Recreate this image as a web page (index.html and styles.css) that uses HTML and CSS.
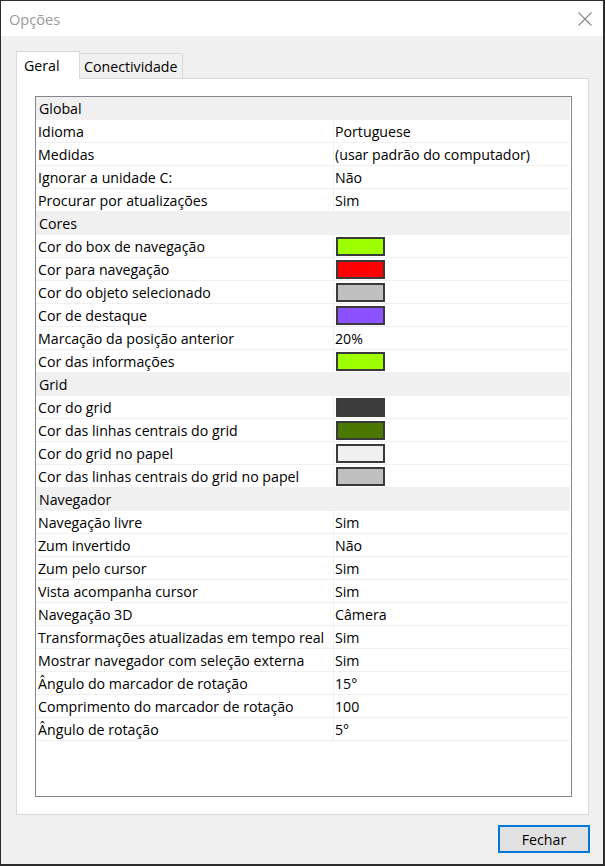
FILE: index.html
```html
<!DOCTYPE html>
<html lang="pt">
<head>
  <meta charset="UTF-8">
  <meta name="viewport" content="width=device-width, initial-scale=1.0">
  <title>Opções</title>
  <link rel="stylesheet" href="styles.css">
</head>
<body>
  <div class="window">
    <!-- Title bar -->
    <div class="titlebar">
      <span class="title">Opções</span>
      <svg class="close" width="14" height="14" viewBox="0 0 14 14">
        <path d="M0.5 0.5 L13.5 13.5 M13.5 0.5 L0.5 13.5" stroke="#8a8a8a" stroke-width="1.1" fill="none" />
      </svg>
    </div>

    <div class="content">
      <!-- Tabs -->
      <div class="tabs">
        <div class="tab active">Geral</div>
        <div class="tab">Conectividade</div>
        <div class="tab-fill"></div>
      </div>

      <div class="panel">
        <div class="grid">
          <div class="cat">Global</div>
          <div class="row"><div class="name">Idioma</div><div class="value">Portuguese</div></div>
          <div class="row"><div class="name">Medidas</div><div class="value">(usar padrão do computador)</div></div>
          <div class="row"><div class="name">Ignorar a unidade C:</div><div class="value">Não</div></div>
          <div class="row"><div class="name">Procurar por atualizações</div><div class="value">Sim</div></div>

          <div class="cat">Cores</div>
          <div class="row"><div class="name">Cor do box de navegação</div><div class="value"><span class="swatch lime"></span></div></div>
          <div class="row"><div class="name">Cor para navegação</div><div class="value"><span class="swatch red"></span></div></div>
          <div class="row"><div class="name">Cor do objeto selecionado</div><div class="value"><span class="swatch silver"></span></div></div>
          <div class="row"><div class="name">Cor de destaque</div><div class="value"><span class="swatch purple"></span></div></div>
          <div class="row"><div class="name">Marcação da posição anterior</div><div class="value">20%</div></div>
          <div class="row"><div class="name">Cor das informações</div><div class="value"><span class="swatch lime"></span></div></div>

          <div class="cat">Grid</div>
          <div class="row"><div class="name">Cor do grid</div><div class="value"><span class="swatch dark"></span></div></div>
          <div class="row"><div class="name">Cor das linhas centrais do grid</div><div class="value"><span class="swatch green"></span></div></div>
          <div class="row"><div class="name">Cor do grid no papel</div><div class="value"><span class="swatch paper"></span></div></div>
          <div class="row"><div class="name">Cor das linhas centrais do grid no papel</div><div class="value"><span class="swatch silver"></span></div></div>

          <div class="cat">Navegador</div>
          <div class="row"><div class="name">Navegação livre</div><div class="value">Sim</div></div>
          <div class="row"><div class="name">Zum invertido</div><div class="value">Não</div></div>
          <div class="row"><div class="name">Zum pelo cursor</div><div class="value">Sim</div></div>
          <div class="row"><div class="name">Vista acompanha cursor</div><div class="value">Sim</div></div>
          <div class="row"><div class="name">Navegação 3D</div><div class="value">Câmera</div></div>
          <div class="row"><div class="name">Transformações atualizadas em tempo real</div><div class="value">Sim</div></div>
          <div class="row"><div class="name">Mostrar navegador com seleção externa</div><div class="value">Sim</div></div>
          <div class="row"><div class="name">Ângulo do marcador de rotação</div><div class="value">15°</div></div>
          <div class="row"><div class="name">Comprimento do marcador de rotação</div><div class="value">100</div></div>
          <div class="row"><div class="name">Ângulo de rotação</div><div class="value">5°</div></div>
        </div>
      </div>
    </div>

    <div class="footer">
      <button class="btn">Fechar</button>
    </div>
  </div>
</body>
</html>
```

FILE: styles.css
```css
body {
  margin: 0;
  padding: 0;
  font-family: "Open Sans", "Noto Sans", sans-serif;
  font-size: 14.2px;
  color: #000;
}

.window {
  width: 605px;
  height: 866px;
  box-sizing: border-box;
  border: 1px solid #2b2b2b;
  border-right-width: 2px;
  border-bottom-width: 2px;
  background: #f0f0f0;
  display: flex;
  flex-direction: column;
}

/* Title bar */
.titlebar {
  height: 35px;
  background: #fff;
  display: flex;
  align-items: center;
  justify-content: space-between;
  padding: 0 11px 0 8px;
}

.title {
  color: #9a9a9a;
  font-size: 14.6px;
}

.close {
  display: block;
  margin-top: 1px;
}

/* Tabs */
.content {
  padding: 15px 14px 0 15px;
}

.tabs {
  display: flex;
  align-items: flex-end;
  height: 28px;
}

.tab {
  box-sizing: border-box;
  height: 26px;
  border: 1px solid #d9d9d9;
  border-left: none;
  background: #f0f0f0;
  padding: 2px 4px 0 4px;
  line-height: 22px;
  width: 103px;
}

.tab.active {
  height: 28px;
  width: 64px;
  border-left: 1px solid #d9d9d9;
  border-bottom: none;
  background: #fff;
  padding: 3px 7px 0 7px;
}

.tab-fill {
  flex: 1;
  border-bottom: 1px solid #d9d9d9;
}

.panel {
  background: #fff;
  border: 1px solid #d9d9d9;
  border-top: none;
  height: 736px;
  box-sizing: border-box;
  padding: 17px 16px 0 18px;
}

/* Property grid */
.grid {
  width: 537px;
  height: 701px;
  box-sizing: border-box;
  border: 1px solid #828790;
  padding-right: 1px;
  background: #fff;
}

.cat,
.row {
  height: 23px;
  box-sizing: border-box;
  border-bottom: 1px solid #f0f0f0;
  line-height: 23px;
}

.cat {
  background: #f0f0f0;
  padding-left: 3px;
}

.row {
  display: flex;
}

.name {
  width: 297px;
  padding-left: 2px;
  box-sizing: border-box;
  white-space: nowrap;
}

.value {
  flex: 1;
  border-left: 1px solid #f0f0f0;
  padding-left: 1px;
  display: flex;
  align-items: center;
}

.swatch {
  display: block;
  width: 49px;
  height: 19px;
  box-sizing: border-box;
  border: 2px solid #3a3a3a;
  margin-left: 1px;
}

.lime { background: #9eff00; }
.red { background: #ff0000; }
.silver { background: #c0c0c0; }
.purple { background: #8c52ff; }
.dark { background: #3c3c3c; }
.green { background: #4a7800; }
.paper { background: #f0f0f0; }

/* Footer */
.footer {
  display: flex;
  justify-content: flex-end;
  padding: 10px 13px 0 0;
}

.btn {
  width: 92px;
  height: 28px;
  background: #e1e1e1;
  border: 2px solid #0078d7;
  font-family: inherit;
  font-size: 14.2px;
  color: #000;
  padding: 0;
  cursor: pointer;
}
```
